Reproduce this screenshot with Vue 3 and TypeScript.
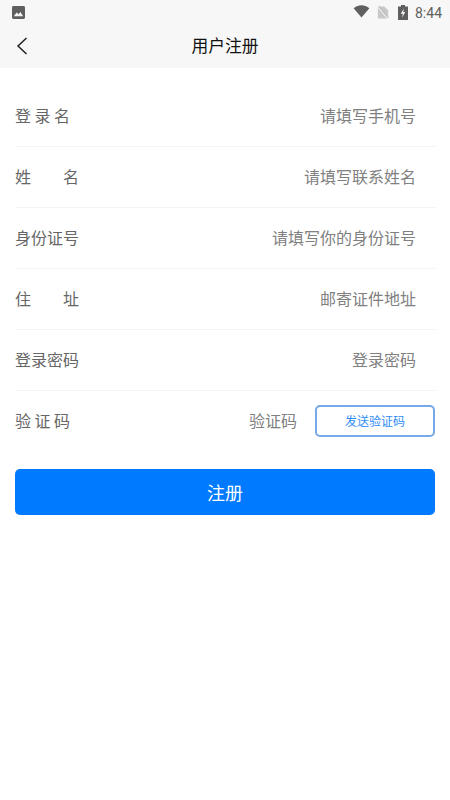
<script setup lang="ts">
interface Row { label: string; spread?: boolean; tight?: boolean; placeholder: string }
const rows: Row[] = [
  { label: '登录名', tight: true, placeholder: '请填写手机号' },
  { label: '姓名', spread: true, placeholder: '请填写联系姓名' },
  { label: '身份证号', placeholder: '请填写你的身份证号' },
  { label: '住址', spread: true, placeholder: '邮寄证件地址' },
  { label: '登录密码', placeholder: '登录密码' },
]
</script>

<template>
  <div class="page">
    <div class="top">
      <div class="status">
        <svg class="pic" viewBox="0 0 14 14" width="13" height="13">
          <rect width="14" height="14" rx="1.5" fill="#5f5f5f" />
          <path d="M2 11 L5 7 L7 9 L9 6.5 L12 11 Z" fill="#f7f7f7" />
        </svg>
        <div class="status-right">
          <svg class="wifi" viewBox="0 0 18 14" width="17" height="13">
            <path d="M0.5 3.5 C5.5 -0.8 12.5 -0.8 17.5 3.5 L9 13.5 Z" fill="#5f5f5f" />
          </svg>
          <svg class="sim" viewBox="0 0 12 14" width="12" height="13">
            <path d="M0.5 0.5 H7.5 L11.5 4.5 V13.5 H0.5 Z" fill="#c8c8c8" />
            <path d="M0 0 L12 14" stroke="#f7f7f7" stroke-width="1.8" />
            <path d="M1.2 0.4 L11.8 13" stroke="#8a8a8a" stroke-width="0.7" />
          </svg>
          <svg class="bat" viewBox="0 0 10 15" width="10" height="15">
            <path d="M3 0 H7 V1.5 H10 V15 H0 V1.5 H3 Z" fill="#5f5f5f" />
            <path d="M5.8 3.5 L2.8 8.8 H4.8 L4.2 12.5 L7.2 7 H5.2 Z" fill="#f7f7f7" />
          </svg>
          <span class="time">8:44</span>
        </div>
      </div>
      <div class="nav">
        <svg class="back" viewBox="0 0 12 18" width="12" height="18">
          <path d="M10.5 1 L2 9 L10.5 17" fill="none" stroke="#222" stroke-width="1.5" />
        </svg>
        <span class="title">用户注册</span>
      </div>
    </div>

    <div class="form">
      <div v-for="row in rows" :key="row.label" class="row">
        <span class="label" :class="{ spread: row.spread, tight: row.tight }">
          <template v-if="row.spread">
            <span>{{ row.label[0] }}</span><span>{{ row.label[1] }}</span>
          </template>
          <template v-else>{{ row.label }}</template>
        </span>
        <span class="placeholder">{{ row.placeholder }}</span>
      </div>
      <div class="row last">
        <span class="label tight code-label">验证码</span>
        <div class="code">
          <span class="code-hint">验证码</span>
          <button class="send" type="button">发送验证码</button>
        </div>
      </div>
      <button class="submit" type="button">注册</button>
    </div>
  </div>
</template>

<style>
html, body { margin: 0; background: #fff; }
</style>

<style scoped>
.page {
  width: 450px;
  height: 800px;
  background: #fff;
  font-family: "Noto Sans CJK SC", "Roboto", sans-serif;
  overflow: hidden;
}
.top {
  height: 68px;
  background: #f7f7f7;
}
.status {
  height: 24px;
  padding: 0 8px 0 12px;
  display: flex;
  align-items: center;
  justify-content: space-between;
  box-sizing: border-box;
}
.status-right {
  display: flex;
  align-items: center;
}
.wifi {
  margin-bottom: 1px;
}
.sim {
  margin-left: 7px;
  margin-top: 1px;
}
.bat {
  margin-left: 9px;
}
.time {
  font-family: Roboto, sans-serif;
  font-size: 14px;
  color: #5f5f5f;
  margin-left: 7px;
  margin-top: 1px;
}
.nav {
  position: relative;
  height: 44px;
  padding-bottom: 2px;
  box-sizing: border-box;
  display: flex;
  align-items: center;
  justify-content: center;
}
.back {
  position: absolute;
  left: 16px;
  top: 13px;
}
.title {
  font-size: 16.8px;
  color: #111;
}
.form {
  padding: 18px 15px 0;
}
.row {
  height: 61px;
  box-sizing: border-box;
  padding-bottom: 2px;
  border-bottom: 1px solid #f3f3f3;
  display: flex;
  align-items: center;
  justify-content: space-between;
}
.row.last {
  border-bottom: none;
}
.label {
  font-size: 16px;
  color: #666;
  width: 64px;
  white-space: nowrap;
}
.label.tight {
  letter-spacing: 3.5px;
}
.label.code-label {
  margin-top: -2px;
}
.label.spread {
  display: flex;
  justify-content: space-between;
}
.placeholder {
  font-size: 16px;
  color: #808080;
  padding-right: 19px;
}
.code {
  display: flex;
  align-items: center;
  gap: 18px;
}
.code-hint {
  font-size: 16px;
  color: #808080;
  margin-top: -2px;
}
.send {
  width: 120px;
  height: 32px;
  box-sizing: border-box;
  border: 2px solid #76a9e8;
  border-radius: 5px;
  background: #fff;
  color: #2f8cf5;
  font-family: inherit;
  font-size: 12px;
  padding: 0;
}
.submit {
  display: block;
  width: 100%;
  height: 46px;
  margin-top: 17px;
  border: none;
  border-radius: 5px;
  background: #007aff;
  color: #fff;
  font-family: inherit;
  font-size: 18px;
  padding: 0;
}
</style>
